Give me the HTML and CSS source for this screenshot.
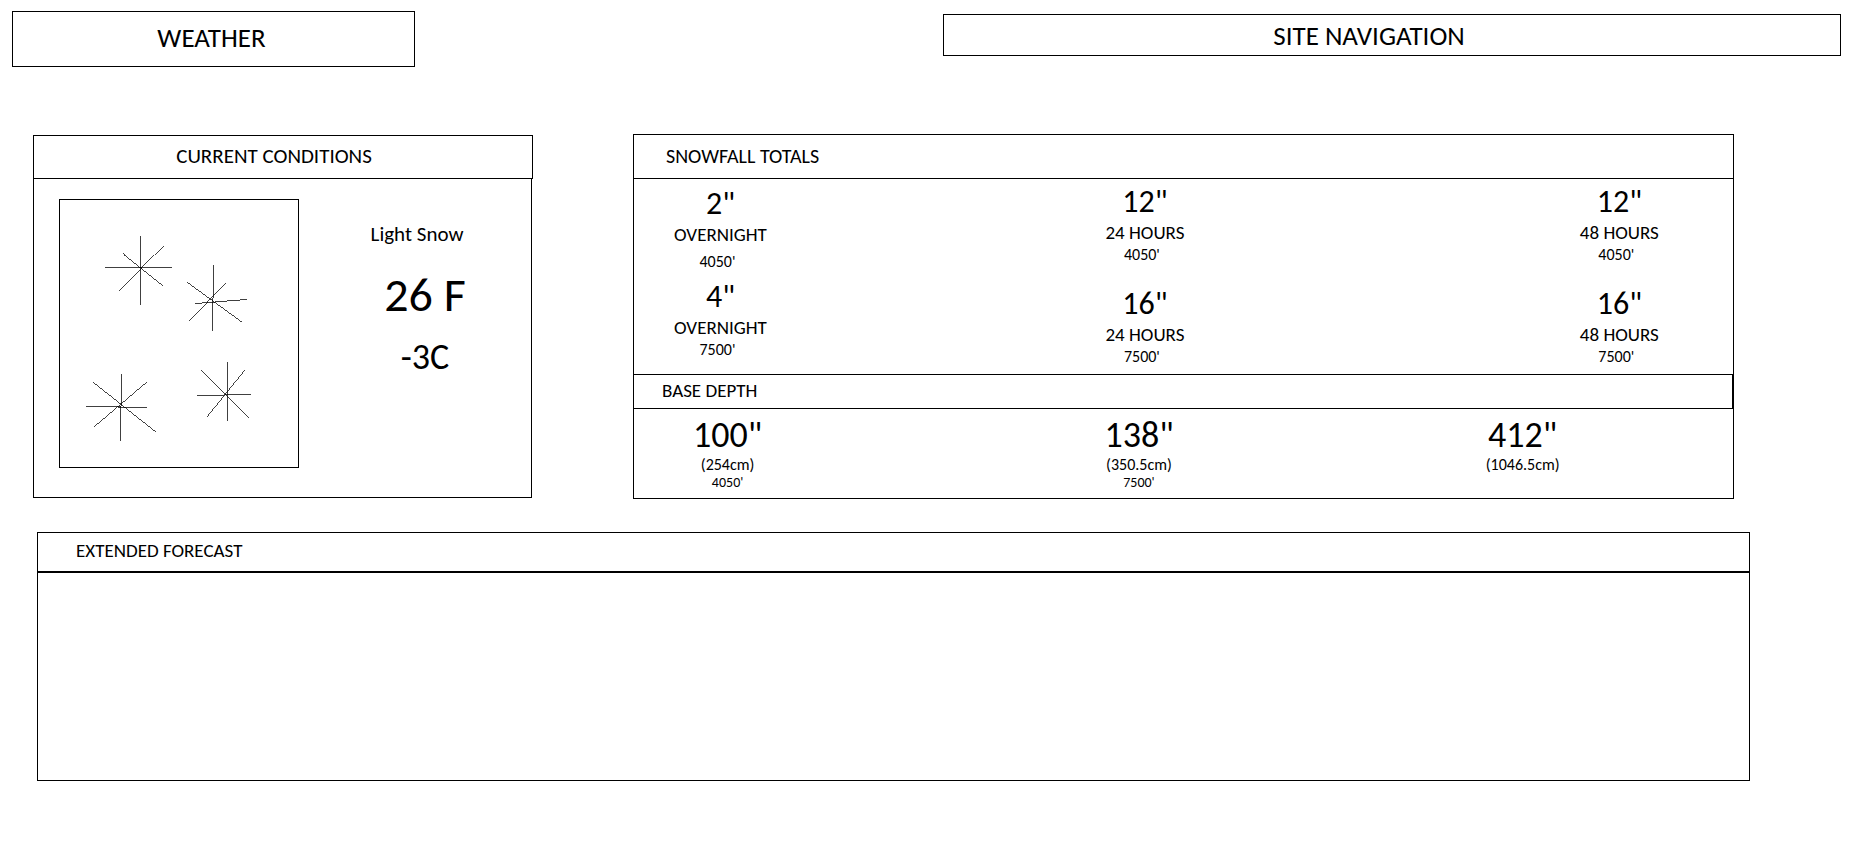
FILE: index.html
```
<!DOCTYPE html>
<html lang="en">
<head>
<meta charset="utf-8">
<meta name="viewport" content="width=device-width, initial-scale=1">
<title>Weather</title>
<link rel="stylesheet" href="styles.css">
</head>
<body>
<header class="top">
  <h1 class="brand">WEATHER</h1>
  <nav class="site-nav" aria-label="Site">SITE NAVIGATION</nav>
</header>
<main>
  <div class="overview">
    <section class="conditions">
      <h2 class="conditions-title">CURRENT CONDITIONS</h2>
      <div class="conditions-body">
        <div class="sky">
          <svg class="flakes" viewBox="0 0 238 267" stroke-width="0.75" role="img" aria-label="Snowflakes">
            <path d="M80.5 36V105M45 67.5H112M62.5 53.5L102.5 85.5M103.5 45.5L59.5 90.5"/>
            <path d="M153.5 65V98M152.5 98V131M126.500 82.500L181.500 122.500M165.500 82.500L128.500 120.500M135 103.500H142M142 102.500H155M155 101.500H167M167 100.500H180M180 99.500H187"/>
            <path d="M61.500 174V206M60.500 206V241M26 206.500H61M58 207.500H87M32.500 182.500L95.500 232.500M86.500 181.500L33.500 226.500"/>
            <path d="M167.500 162V221M137 195.500H164M164 194.500H191M141.500 169.500L189.500 217.500M184.500 169.500L146.500 216.500"/>
          </svg>
        </div>
        <div class="reading">
          <p class="summary">Light Snow</p>
          <div class="temps">
            <p class="temp-f">26 F</p>
            <p class="temp-c">-3C</p>
          </div>
        </div>
      </div>
    </section>
    <section class="snow">
      <h2 class="snow-title">SNOWFALL TOTALS</h2>
      <div class="totals">
        <div class="period period-overnight">
          <div class="stat stat-loose"><p class="amount">2"</p><p class="label">OVERNIGHT</p><p class="elevation">4050'</p></div>
          <div class="stat"><p class="amount">4"</p><p class="label">OVERNIGHT</p><p class="elevation">7500'</p></div>
        </div>
        <div class="period">
          <div class="stat"><p class="amount">12"</p><p class="label">24 HOURS</p><p class="elevation">4050'</p></div>
          <div class="stat"><p class="amount">16"</p><p class="label">24 HOURS</p><p class="elevation">7500'</p></div>
        </div>
        <div class="period">
          <div class="stat"><p class="amount">12"</p><p class="label">48 HOURS</p><p class="elevation">4050'</p></div>
          <div class="stat"><p class="amount">16"</p><p class="label">48 HOURS</p><p class="elevation">7500'</p></div>
        </div>
      </div>
      <h2 class="depth-title">BASE DEPTH</h2>
      <div class="depths">
        <div class="stat"><p class="depth">100"</p><p class="metric">(254cm)</p><p class="site">4050'</p></div>
        <div class="stat"><p class="depth">138"</p><p class="metric">(350.5cm)</p><p class="site">7500'</p></div>
        <div class="stat"><p class="depth">412"</p><p class="metric">(1046.5cm)</p></div>
      </div>
    </section>
  </div>
  <section class="forecast">
    <h2 class="forecast-title">EXTENDED FORECAST</h2>
    <div class="forecast-body"></div>
  </section>
</main>
</body>
</html>
```
FILE: styles.css
```
* {
  box-sizing: border-box;
}

body {
  margin: 0;
  background: #fff;
  color: #000;
  font-family: Calibri, Carlito, Lato, sans-serif;
  font-size: 19px;
  line-height: 24px;
}

h1,
h2,
p {
  margin: 0;
  font-weight: 400;
}

h2 {
  font-size: 19px;
}

.top {
  display: grid;
  grid-template-columns: 403fr 898fr;
  column-gap: 528px;
  align-items: center;
  padding: 11px 19px 0 12px;
}

.brand,
.site-nav {
  border: 1px solid #000;
  font-size: 27px;
  line-height: 30px;
  text-align: center;
}

.brand {
  padding: 11px 4px 13px 0;
}

.site-nav {
  margin-bottom: 8px;
  padding: 6px 46px 4px 0;
}

.overview {
  display: grid;
  grid-template-columns: 500fr 1101fr;
  column-gap: 100px;
  align-items: center;
  margin: 67px 126px 0 33px;
}

.conditions-title {
  padding: 8px 18px 10px 0;
  border: 1px solid #000;
  font-size: 21px;
  text-align: center;
}

.conditions-body {
  display: grid;
  grid-template-columns: 240fr 232fr;
  align-items: start;
  margin-right: 1px;
  padding: 20px 0 29px 25px;
  border: 1px solid #000;
  border-top: 0;
}

.sky {
  border: 1px solid #000;
}

.flakes {
  display: block;
  width: 100%;
  fill: none;
  stroke: #000;
  shape-rendering: crispEdges;
}

.reading {
  padding: 23px 0 0 4px;
  text-align: center;
}

.summary {
  font-size: 21px;
}

.temps {
  padding: 24px 0 0 16px;
}

.temp-f {
  font-size: 48px;
  line-height: 50px;
}

.temp-c {
  margin-top: 18px;
  font-size: 36px;
  line-height: 38px;
}

.snow {
  border: 1px solid #000;
}

.snow-title {
  padding: 9px 32px 10px;
  border-bottom: 1px solid #000;
  font-size: 20px;
}

.totals {
  display: grid;
  grid-template-columns: 431fr 474fr 153fr;
  justify-items: start;
  padding: 4px 0 7px 40px;
}

.period {
  display: flex;
  flex-direction: column;
  gap: 20px;
}

.period-overnight {
  gap: 6px;
  padding-top: 2px;
}

.stat {
  text-align: center;
}

.stat-loose .label {
  padding-bottom: 5px;
}

.amount {
  font-size: 32px;
  line-height: 38px;
}

.elevation {
  padding-right: 6px;
  font-size: 16px;
  line-height: 20px;
}

.depth-title {
  padding: 4px 28px 5px;
  border: 1px solid #000;
  border-left: 0;
}

.depths {
  display: grid;
  grid-template-columns: 411fr 381fr 247fr;
  justify-items: start;
  padding: 6px 0 7px 59px;
}

.depth {
  font-size: 36px;
  line-height: 40px;
}

.metric {
  font-size: 16px;
  line-height: 20px;
}

.site {
  font-size: 14px;
  line-height: 16px;
}

.forecast {
  margin: 33px 110px 0 37px;
  border: 1px solid #000;
}

.forecast-title {
  padding: 6px 38px 8px;
  border-bottom: 2px solid #000;
}

.forecast-body {
  min-height: 207px;
}
```
